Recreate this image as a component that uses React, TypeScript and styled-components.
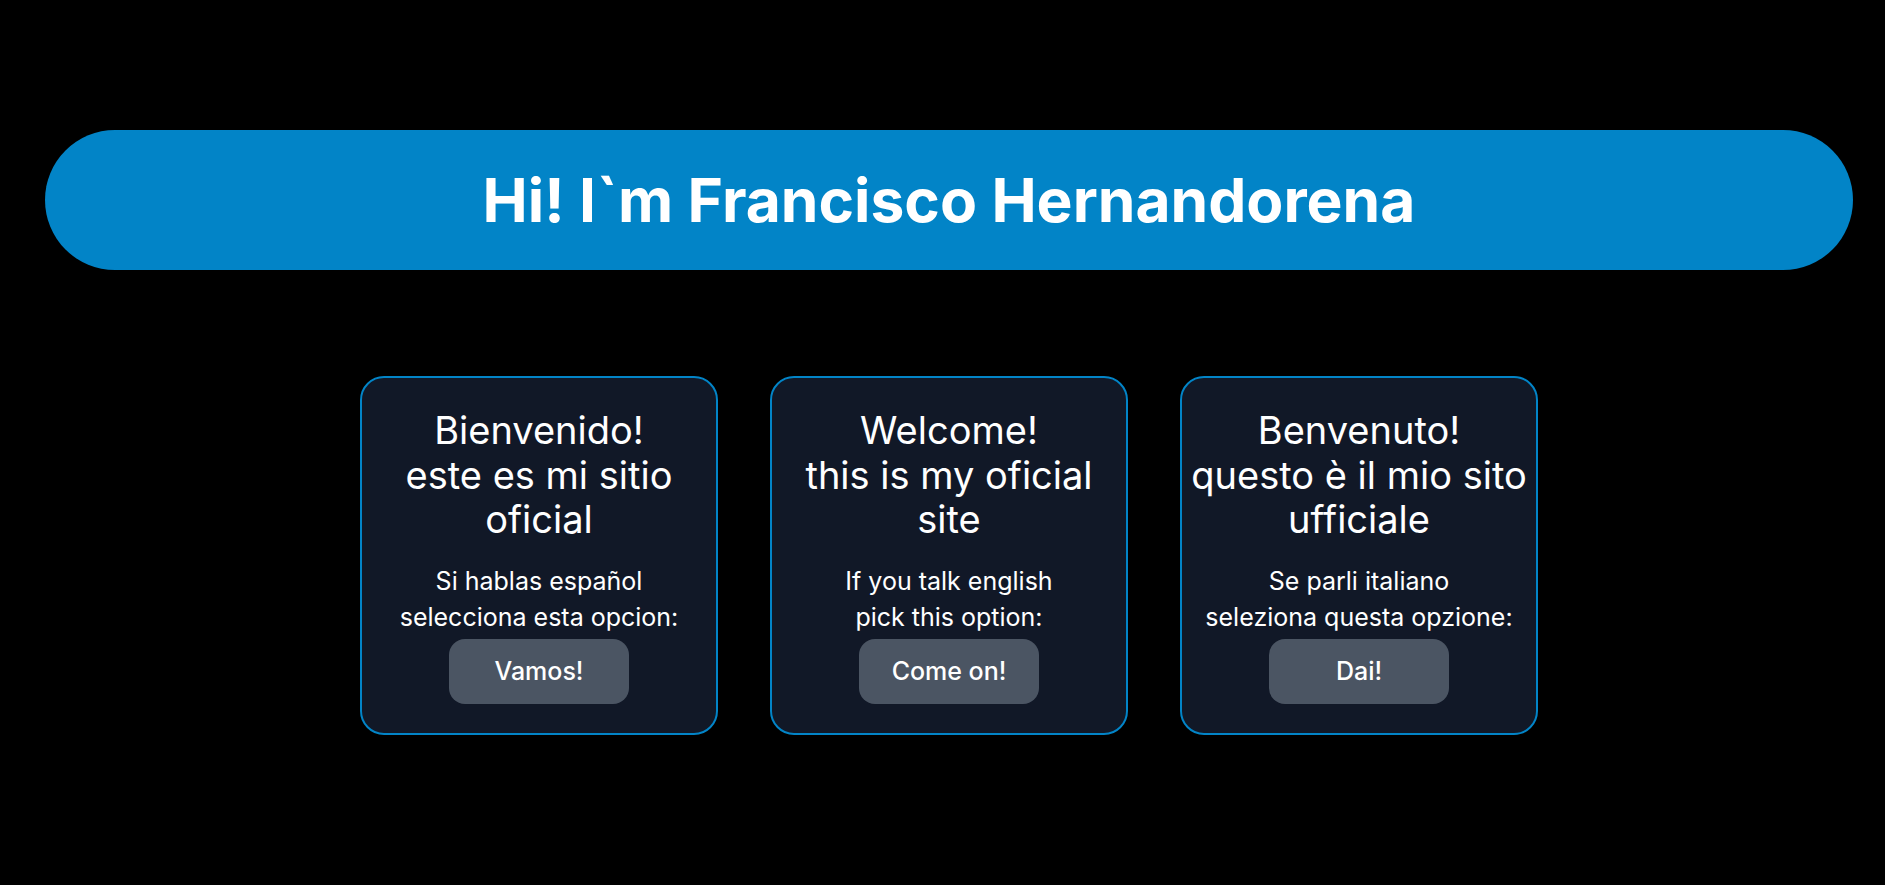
import React from "react";
import styled, { createGlobalStyle } from "styled-components";

const GlobalStyle = createGlobalStyle`
  html, body {
    margin: 0;
    padding: 0;
    background: #000000;
  }
  body {
    font-family: Inter, "Noto Sans", "Liberation Sans", sans-serif;
    color: #ffffff;
  }
`;

const Page = styled.main`
  min-height: 885px;
  background: #000000;
  padding: 130px 32px 0 45px;
  box-sizing: border-box;
  display: flex;
  flex-direction: column;
  align-items: stretch;
  gap: 106px;
`;

const Header = styled.header`
  height: 140px;
  border-radius: 70px;
  background: #0284c7;
  display: flex;
  align-items: center;
  justify-content: center;
`;

const HeaderTitle = styled.h1`
  margin: 0;
  font-size: 60.5px;
  line-height: 1;
  font-weight: 700;
  color: #ffffff;
`;

const CardRow = styled.section`
  display: flex;
  justify-content: center;
  gap: 52px;
`;

const Card = styled.article`
  width: 358px;
  box-sizing: border-box;
  border: 2px solid #0284c7;
  border-radius: 24px;
  background: #111827;
  padding: 30px 8px 29px;
  display: flex;
  flex-direction: column;
  align-items: center;
  text-align: center;
`;

const CardTitle = styled.h2`
  margin: 0;
  font-size: 38px;
  line-height: 44.5px;
  font-weight: 400;
  color: #ffffff;
  white-space: nowrap;
`;

const CardText = styled.p`
  margin: 21px 0 4px;
  font-size: 25px;
  line-height: 36px;
  font-weight: 400;
  color: #ffffff;
  white-space: nowrap;
`;

const CardButton = styled.button`
  width: 180px;
  height: 65px;
  border: none;
  border-radius: 16px;
  background: #4b5563;
  color: #ffffff;
  font-family: inherit;
  font-size: 25px;
  font-weight: 500;
  cursor: pointer;
`;

type Option = {
  title: string[];
  text: string[];
  button: string;
};

const options: Option[] = [
  {
    title: ["Bienvenido!", "este es mi sitio", "oficial"],
    text: ["Si hablas español", "selecciona esta opcion:"],
    button: "Vamos!",
  },
  {
    title: ["Welcome!", "this is my oficial", "site"],
    text: ["If you talk english", "pick this option:"],
    button: "Come on!",
  },
  {
    title: ["Benvenuto!", "questo è il mio sito", "ufficiale"],
    text: ["Se parli italiano", "seleziona questa opzione:"],
    button: "Dai!",
  },
];

const Lines = ({ lines }: { lines: string[] }) => (
  <>
    {lines.map((l, i) => (
      <React.Fragment key={i}>
        {i > 0 && <br />}
        {l}
      </React.Fragment>
    ))}
  </>
);

export default function App() {
  return (
    <>
      <GlobalStyle />
      <Page>
        <Header>
          <HeaderTitle>Hi! I`m Francisco Hernandorena</HeaderTitle>
        </Header>
        <CardRow>
          {options.map((o) => (
            <Card key={o.button}>
              <CardTitle>
                <Lines lines={o.title} />
              </CardTitle>
              <CardText>
                <Lines lines={o.text} />
              </CardText>
              <CardButton>{o.button}</CardButton>
            </Card>
          ))}
        </CardRow>
      </Page>
    </>
  );
}
